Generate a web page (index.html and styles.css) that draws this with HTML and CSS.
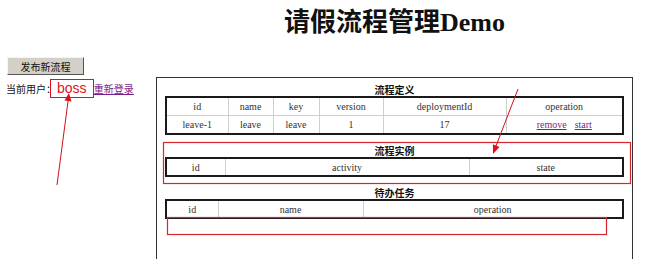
FILE: index.html
```html
<!DOCTYPE html>
<html lang="zh">
<head>
    <meta charset="UTF-8">
    <title>请假流程管理Demo</title>
    <link rel="stylesheet" href="styles.css">
</head>
<body>
    <div class="page">
        <aside class="side">
            <button class="btn">发布新流程</button>
            <div class="user">当前用户：<span class="name">boss</span> <a href="#">重新登录</a></div>
        </aside>
        <main class="main">
            <h1>请假流程管理Demo</h1>
            <div class="panel">
                <table class="grid t1">
                    <caption>流程定义</caption>
                    <colgroup>
                        <col class="w62"><col class="w45"><col class="w46"><col class="w64"><col class="w123"><col>
                    </colgroup>
                    <tr><th>id</th><th>name</th><th>key</th><th>version</th><th>deploymentId</th><th>operation</th></tr>
                    <tr><td>leave-1</td><td>leave</td><td>leave</td><td>1</td><td>17</td><td><a href="#">remove</a><a href="#" class="gap">start</a></td></tr>
                </table>
                <table class="grid t2">
                    <caption>流程实例</caption>
                    <colgroup><col class="w59"><col class="w244"><col></colgroup>
                    <tr><th>id</th><th>activity</th><th>state</th></tr>
                </table>
                <table class="grid t3">
                    <caption>待办任务</caption>
                    <colgroup><col class="w52"><col class="w145"><col></colgroup>
                    <tr><th>id</th><th>name</th><th>operation</th></tr>
                </table>
            </div>
        </main>
    </div>

    <!-- red marks drawn over the screenshot -->
    <svg class="marks" width="670" height="259" viewBox="0 0 670 259">
        <rect x="50.5" y="79.5" width="43" height="18" fill="none" stroke="#d8141c" stroke-width="1"/>
        <rect x="163.5" y="142.5" width="467" height="41" fill="none" stroke="#d8262e" stroke-width="1.2"/>
        <rect x="167.5" y="217.5" width="439" height="17" fill="none" stroke="#d8262e" stroke-width="1.2"/>
        <line x1="57" y1="185" x2="68.2" y2="100" stroke="#d0101a" stroke-width="1"/>
        <polygon points="69,93 71.5,101.4 64.5,100.5" fill="#e0101a"/>
        <line x1="518" y1="89" x2="496" y2="146" stroke="#d0101a" stroke-width="1"/>
        <polygon points="493,154 499.5,146.9 492.9,144.3" fill="#e0101a"/>
    </svg>
</body>
</html>
```

FILE: styles.css
```css
body {
    margin: 0;
    background: white;
    font-family: "Liberation Serif", "Noto Sans CJK SC", serif;
    color: #222;
}
.page {
    display: flex;
    padding-left: 6px;
}
.side {
    width: 150px;
    padding-top: 57px;
    font-family: "Noto Sans CJK SC", "Liberation Sans", sans-serif;
    font-size: 10px;
}
.btn {
    display: block;
    width: 77px;
    height: 18px;
    margin-left: 1px;
    padding: 0;
    font-family: "Noto Sans CJK SC", sans-serif;
    font-size: 10px;
    color: #111;
    background: #d4d0c8;
    border: 1px solid;
    border-color: #f4f4f4 #555 #555 #f4f4f4;
}
.user {
    margin-top: 4px;
    line-height: 18px;
    color: #111;
}
.name {
    font-family: "Liberation Sans", sans-serif;
    font-size: 14px;
    color: #d8141c;
    margin: 0 5px 0 1px;
}
.user a {
    color: #7b1d8c;
}
.main {
    width: 477px;
}
h1 {
    margin: 7px 0 0;
    line-height: 32px;
    font-size: 26px;
    text-align: center;
    color: #111;
}
.panel {
    box-sizing: border-box;
    width: 477px;
    height: 183px;
    margin-top: 38px;
    padding: 6px 8px 0;
    border: 1px solid #333;
    border-bottom: none;
}
.grid {
    width: 459px;
    table-layout: fixed;
    border-collapse: collapse;
    border: 2px solid #1a1a1a;
    font-size: 10px;
    color: #333;
}
.grid caption {
    font-family: "Noto Sans CJK SC", sans-serif;
    font-weight: bold;
    font-size: 10px;
    line-height: 12px;
    color: #111;
}
.grid th, .grid td {
    height: 16px;
    padding: 0;
    font-weight: normal;
    text-align: center;
    border: 1px solid #cfcfcf;
}
.t1 th, .t1 td {
    height: 17px;
}
.grid td a {
    color: #7b1d8c;
}
.grid .gap {
    margin-left: 8px;
}
.t2 {
    margin-top: 10px;
}
.t3 {
    margin-top: 10px;
}
.w62 { width: 62px; }
.w45 { width: 45px; }
.w46 { width: 46px; }
.w64 { width: 64px; }
.w123 { width: 123px; }
.w59 { width: 59px; }
.w244 { width: 244px; }
.w52 { width: 52px; }
.w145 { width: 145px; }
.marks {
    position: absolute;
    left: 0;
    top: 0;
    pointer-events: none;
}
```
